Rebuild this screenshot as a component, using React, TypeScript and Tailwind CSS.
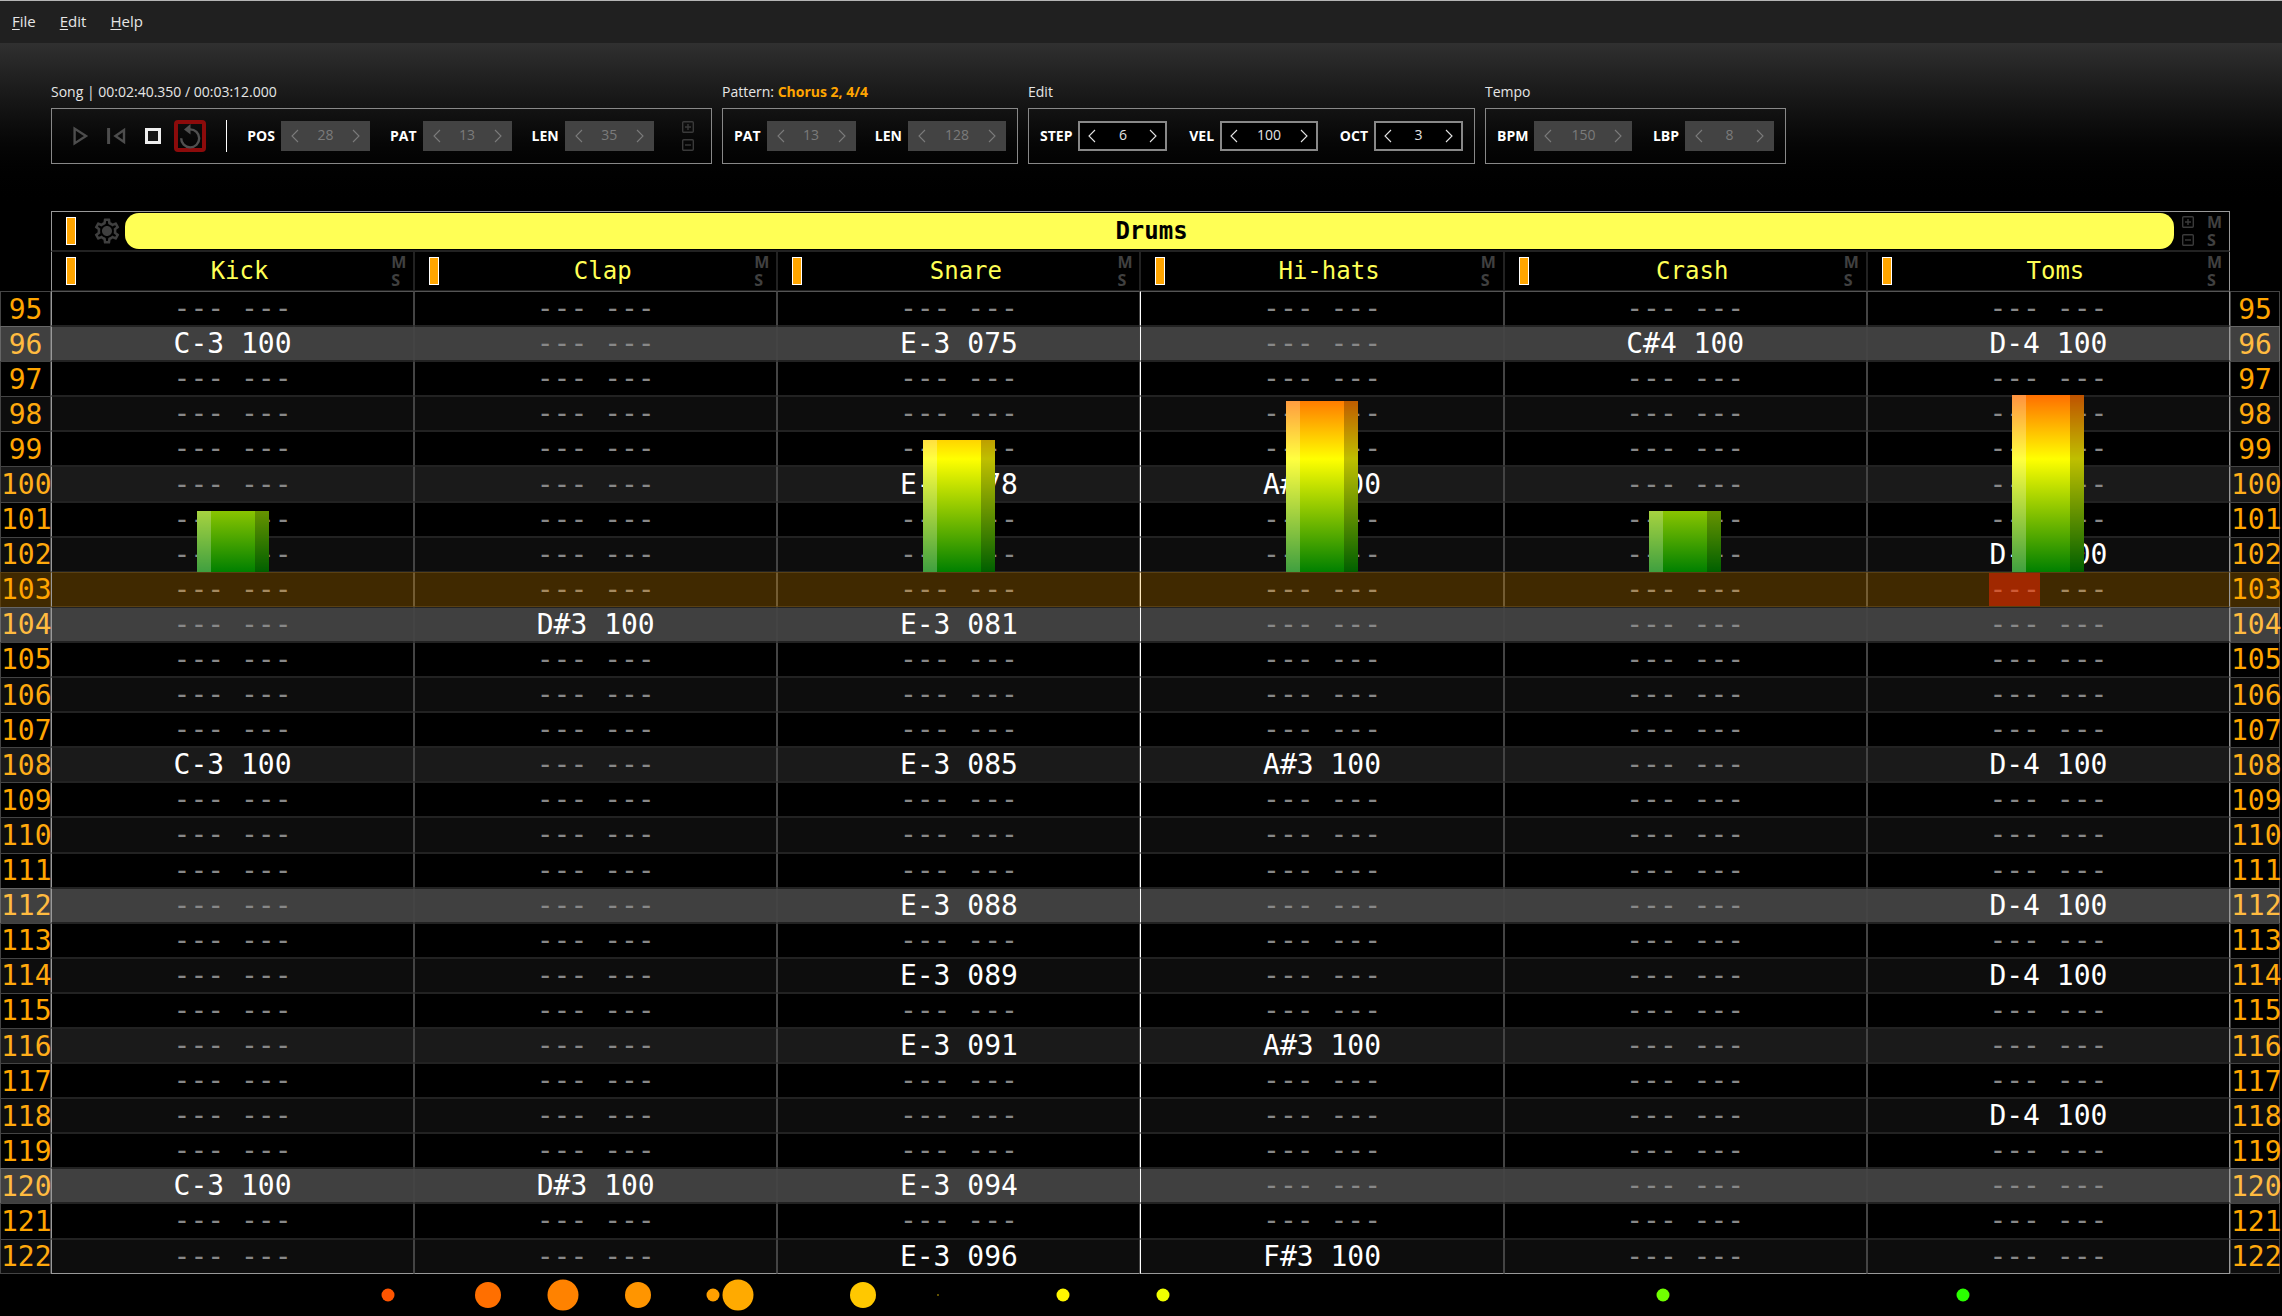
import type { ReactNode } from "react";
import { MdOutlineSettings } from "react-icons/md";
import clsx from "clsx";

const TRACKS = ["Kick", "Clap", "Snare", "Hi-hats", "Crash", "Toms"];
const FIRST_LINE = 95;
const LAST_LINE = 122;
const PLAY_LINE = 103;
const EMPTY = "--- ---";

const NOTES: Record<number, Record<number, string>> = {
  96: { 0: "C-3 100", 2: "E-3 075", 4: "C#4 100", 5: "D-4 100" },
  100: { 2: "E-3 078", 3: "A#3 100" },
  102: { 5: "D-4 100" },
  104: { 1: "D#3 100", 2: "E-3 081" },
  108: { 0: "C-3 100", 2: "E-3 085", 3: "A#3 100", 5: "D-4 100" },
  112: { 2: "E-3 088", 5: "D-4 100" },
  114: { 2: "E-3 089", 5: "D-4 100" },
  116: { 2: "E-3 091", 3: "A#3 100" },
  118: { 5: "D-4 100" },
  120: { 0: "C-3 100", 1: "D#3 100", 2: "E-3 094" },
  122: { 2: "E-3 096", 3: "F#3 100" },
};

const LEVELS = [61, 0, 132, 171, 61, 177];

const DOTS = [
  { x: 388, r: 6.5, fill: "#ff5500" },
  { x: 488, r: 13, fill: "#ff6f00" },
  { x: 563, r: 15.5, fill: "#ff8200" },
  { x: 638, r: 13, fill: "#ff9500" },
  { x: 713, r: 6.5, fill: "#ffa000" },
  { x: 738, r: 15.5, fill: "#ffaa00" },
  { x: 863, r: 13, fill: "#ffc800" },
  { x: 938, r: 1, fill: "#806d00" },
  { x: 1063, r: 6.5, fill: "#fff700" },
  { x: 1163, r: 6.5, fill: "#f0ff00" },
  { x: 1663, r: 6.5, fill: "#70ff00" },
  { x: 1963, r: 6.5, fill: "#2aff00" },
];

function Chevron({ flip }: { flip?: boolean }) {
  return (
    <svg width="8" height="14" viewBox="0 0 8 14" fill="none" stroke="currentColor" strokeWidth="1.1">
      <path d={flip ? "M1 1 L7 7 L1 13" : "M7 1 L1 7 L7 13"} />
    </svg>
  );
}

function Field({ label, value, id, enabled, wide }: { label: string; value: string; id: string; enabled?: boolean; wide?: boolean }) {
  return (
    <div className="flex items-center gap-1.5">
      <label htmlFor={id} className="font-bold text-white">{label}</label>
      <div
        className={clsx(
          "flex h-[30px] items-center justify-between",
          wide ? "w-[98px]" : "w-[89px]",
          enabled ? "border-2 border-[#888] bg-black px-2 text-[#e4e4e4]" : "bg-[#434343] px-2.5 text-[#7b7b7b]",
        )}
      >
        <button type="button" aria-label={`Decrease ${label}`} disabled={!enabled}><Chevron /></button>
        <input
          id={id}
          type="text"
          defaultValue={value}
          disabled={!enabled}
          className="h-6 w-0 min-w-0 flex-1 bg-transparent pb-1 text-center text-sm outline-none"
        />
        <button type="button" aria-label={`Increase ${label}`} disabled={!enabled}><Chevron flip /></button>
      </div>
    </div>
  );
}

function Panel({ title, className, children }: { title: ReactNode; className: string; children: ReactNode }) {
  return (
    <section className={clsx("flex flex-col gap-1.5", className)}>
      <h2 className="leading-5 whitespace-nowrap text-[#e6e6e6]">{title}</h2>
      <div className="flex h-14 items-center justify-between border border-[#888] px-[11px]">{children}</div>
    </section>
  );
}

function PlusMinus() {
  return (
    <div className="flex flex-col gap-1.5 text-[#3a3a3a]">
      <button type="button" aria-label="Add">
        <svg className="block" width="12" height="12" viewBox="0 0 12 12" fill="none" stroke="currentColor" strokeWidth="1.4">
          <rect x="0.7" y="0.7" width="10.6" height="10.6" rx="1" />
          <path d="M3 6 H9 M6 3 V9" />
        </svg>
      </button>
      <button type="button" aria-label="Remove">
        <svg className="block" width="12" height="12" viewBox="0 0 12 12" fill="none" stroke="currentColor" strokeWidth="1.4">
          <rect x="0.7" y="0.7" width="10.6" height="10.6" rx="1" />
          <path d="M3 6 H9" />
        </svg>
      </button>
    </div>
  );
}

function MuteSolo() {
  return (
    <div className="flex w-[14px] flex-col items-start font-['Open_Sans',sans-serif] text-base leading-[18px] font-bold text-[#404040]">
      <button type="button" aria-label="Mute">M</button>
      <button type="button" aria-label="Solo">S</button>
    </div>
  );
}

function Indicator() {
  return <div className="h-7 w-2.5 border border-white bg-[#ffa500]" />;
}

function Gear() {
  return (
    <svg className="block" width="30" height="30" viewBox="0 0 24 24">
      <MdOutlineSettings width={24} height={24} color="#3f3f3f" />
      <circle cx="12" cy="12" r="3.2" fill="#3f3f3f" />
    </svg>
  );
}

function LevelBar({ level }: { level: number }) {
  return (
    <div
      className="absolute bottom-full left-1/2 z-10 mb-px flex w-[72px] -translate-x-1/2 justify-between bg-[linear-gradient(to_top,#008000_0px,#ffff00_113px,#ff0000_226px)]"
      style={{ height: level }}
    >
      <div className="w-3.5 bg-white/25" />
      <div className="w-3.5 bg-black/25" />
    </div>
  );
}

function lineTone(line: number) {
  if (line === PLAY_LINE) return "bg-[#402900] border-y-[#5a4012]";
  if (line % 8 === 0) return "bg-[#404040] border-y-[#222]";
  if (line % 4 === 0) return "bg-[#1a1a1a] border-y-[#222]";
  if (line % 2 === 0) return "bg-[#0d0d0d] border-y-[#222]";
  return "bg-black border-y-[#222]";
}

function LineNumber({ line, last }: { line: number; last: boolean }) {
  const tone =
    line === PLAY_LINE
      ? "bg-[#402900] border-[#5a4012] text-[#ffa500]"
      : line % 8 === 0
        ? "bg-[#404040] border-[#666] text-[#ffbb40]"
        : line % 4 === 0
          ? "bg-[#1a1a1a] border-[#444] text-[#ffae1a]"
          : line % 2 === 0
            ? "bg-[#0d0d0d] border-[#444] text-[#ffa90d]"
            : "bg-black border-[#444] text-[#ffa500]";
  return (
    <th scope="row" className={clsx("border-x border-t p-0 font-normal", last && "border-b", tone)}>
      {line}
    </th>
  );
}

function NoteCell({ line, track }: { line: number; track: number }) {
  const note = NOTES[line]?.[track];
  const playing = line === PLAY_LINE;
  const left =
    track === 0
      ? "border-l-[#999]"
      : track === 3
        ? playing ? "border-l-[#ffe9bf]" : "border-l-white"
        : playing ? "border-l-[#735c33]" : "border-l-[#444]";
  const right = track === 5 ? "border-r-[#999]" : playing ? "border-r-[#735c33]" : "border-r-[#444]";
  return (
    <td
      className={clsx(
        "relative border p-0 text-center",
        lineTone(line),
        left,
        right,
        line === FIRST_LINE && "border-t-[#555]!",
        line === LAST_LINE && "border-b-[#999]!",
        note ? "text-white" : playing ? "text-[#a58a60]" : "text-[#888]",
      )}
    >
      {playing && track === 5 ? (
        <>
          <span className="bg-[#a02800] text-[#cf5a35]">---</span> ---
        </>
      ) : (
        note ?? EMPTY
      )}
      {playing && LEVELS[track] > 0 && <LevelBar level={LEVELS[track]} />}
    </td>
  );
}

export default function App() {
  const lines = Array.from({ length: LAST_LINE - FIRST_LINE + 1 }, (_, i) => FIRST_LINE + i);
  return (
    <div className="flex min-h-screen flex-col bg-black font-['Open_Sans','Noto_Sans',sans-serif] text-sm text-white">
      <nav className="flex h-[43px] items-center gap-6 border-t border-[#b5b5b5] bg-[#202020] px-3 pb-0.5 text-[15px] text-[#e6e6e6]">
        {["File", "Edit", "Help"].map((item) => (
          <button key={item} type="button" className="leading-5">
            <span className="underline underline-offset-2">{item[0]}</span>
            {item.slice(1)}
          </button>
        ))}
      </nav>

      <header className="flex h-[168px] gap-2.5 bg-linear-to-b from-[#303030] to-black px-[51px] pt-[39px]">
        <Panel className="w-[661px]" title="Song | 00:02:40.350 / 00:03:12.000">
          <div className="flex h-8 items-center pl-2.5">
            <button type="button" aria-label="Play" className="text-[#4d4d4d]">
              <svg className="block" width="16" height="20" viewBox="0 0 16 20" fill="none" stroke="currentColor" strokeWidth="2.4">
                <path d="M1.6 2.6 V17.4 L13 10 Z" />
              </svg>
            </button>
            <button type="button" aria-label="Rewind" className="ml-[18px] text-[#4d4d4d]">
              <svg className="block" width="19" height="18" viewBox="0 0 19 18" fill="none" stroke="currentColor" strokeWidth="2.4">
                <path d="M1.6 1 V17" strokeWidth="3" />
                <path d="M17 3 V15 L8.4 9 Z" />
              </svg>
            </button>
            <button type="button" aria-label="Stop" className="ml-[19px] size-4 border-3 border-[#eee] bg-[#161616]" />
            <button type="button" aria-label="Loop" className="ml-[13px] flex size-8 items-center justify-center rounded border-4 border-[#8c0b0b] text-[#505050]">
              <svg width="24" height="26" viewBox="0 0 24 26" fill="none" stroke="currentColor" strokeWidth="2.4" className="shrink-0">
                <path d="M12 6.4 A9 9 0 1 1 3.2 15.2" />
                <path d="M12.5 1 L6 6.5 L12.5 11.5 Z" fill="currentColor" stroke="none" />
              </svg>
            </button>
            <div className="ml-5 h-8 w-px bg-white" />
          </div>
          <div className="mr-2 flex gap-5">
            <Field id="song-pos" label="POS" value="28" />
            <Field id="song-pat" label="PAT" value="13" />
            <Field id="song-len" label="LEN" value="35" />
          </div>
          <div className="pr-1.5"><PlusMinus /></div>
        </Panel>
        <Panel className="w-[296px]" title={<>Pattern: <b className="text-[#ffa500]">Chorus 2, 4/4</b></>}>
          <Field id="pattern-pat" label="PAT" value="13" />
          <Field id="pattern-len" label="LEN" value="128" wide />
        </Panel>
        <Panel className="w-[447px]" title="Edit">
          <Field id="edit-step" label="STEP" value="6" enabled />
          <Field id="edit-vel" label="VEL" value="100" enabled wide />
          <Field id="edit-oct" label="OCT" value="3" enabled />
        </Panel>
        <Panel className="w-[301px]" title="Tempo">
          <Field id="tempo-bpm" label="BPM" value="150" wide />
          <Field id="tempo-lbp" label="LBP" value="8" />
        </Panel>
      </header>

      <main className="grid flex-1 pr-0.5">
        <table className="w-full table-fixed border-separate border-spacing-0 font-['DejaVu_Sans_Mono',monospace]">
          <colgroup>
            <col className="w-[51px]" />
            {TRACKS.map((t) => <col key={t} />)}
            <col className="w-[50px]" />
          </colgroup>
          <thead className="text-2xl">
            <tr className="h-[41px]">
              <td className="p-0" />
              <th colSpan={6} className="border-x border-t border-b-2 border-[#999] border-b-[#222] p-0">
                <div className="flex h-[38px] items-center pr-2 pl-3.5">
                  <Indicator />
                  <button type="button" aria-label="Column settings" className="ml-4"><Gear /></button>
                  <div className="ml-[3px] h-9 flex-1 rounded-[14px] bg-[#ffff55] pl-1 text-center leading-9 font-bold text-black">Drums</div>
                  <div className="mr-[13px] ml-2"><PlusMinus /></div>
                  <MuteSolo />
                </div>
              </th>
              <td className="p-0" />
            </tr>
            <tr className="h-[39px]">
              <td className="p-0" />
              {TRACKS.map((name, i) => (
                <th
                  key={name}
                  scope="col"
                  className={clsx(
                    "border-x border-b border-[#222] p-0 font-normal",
                    i === 0 && "border-l-[#999]",
                    i === 5 && "border-r-[#999]",
                  )}
                >
                  <div className="flex h-[38px] items-center pr-2 pl-3.5">
                    <Indicator />
                    <div className="flex-1 pl-3 text-center leading-9 text-[#ffff55]">{name}</div>
                    <MuteSolo />
                  </div>
                </th>
              ))}
              <td className="p-0" />
            </tr>
          </thead>
          <tbody className="text-[28px] leading-[33px] whitespace-nowrap">
            {lines.map((line) => (
              <tr key={line}>
                <LineNumber line={line} last={line === LAST_LINE} />
                {TRACKS.map((t, i) => <NoteCell key={t} line={line} track={i} />)}
                <LineNumber line={line} last={line === LAST_LINE} />
              </tr>
            ))}
          </tbody>
        </table>
      </main>

      <footer className="h-[42px]">
        <svg className="block" width="100%" height="42" aria-label="Spectrum">
          {DOTS.map((d) => (
            <circle key={d.x} cx={`${(d.x / 2282) * 100}%`} cy="21" r={d.r} fill={d.fill} />
          ))}
        </svg>
      </footer>
    </div>
  );
}
